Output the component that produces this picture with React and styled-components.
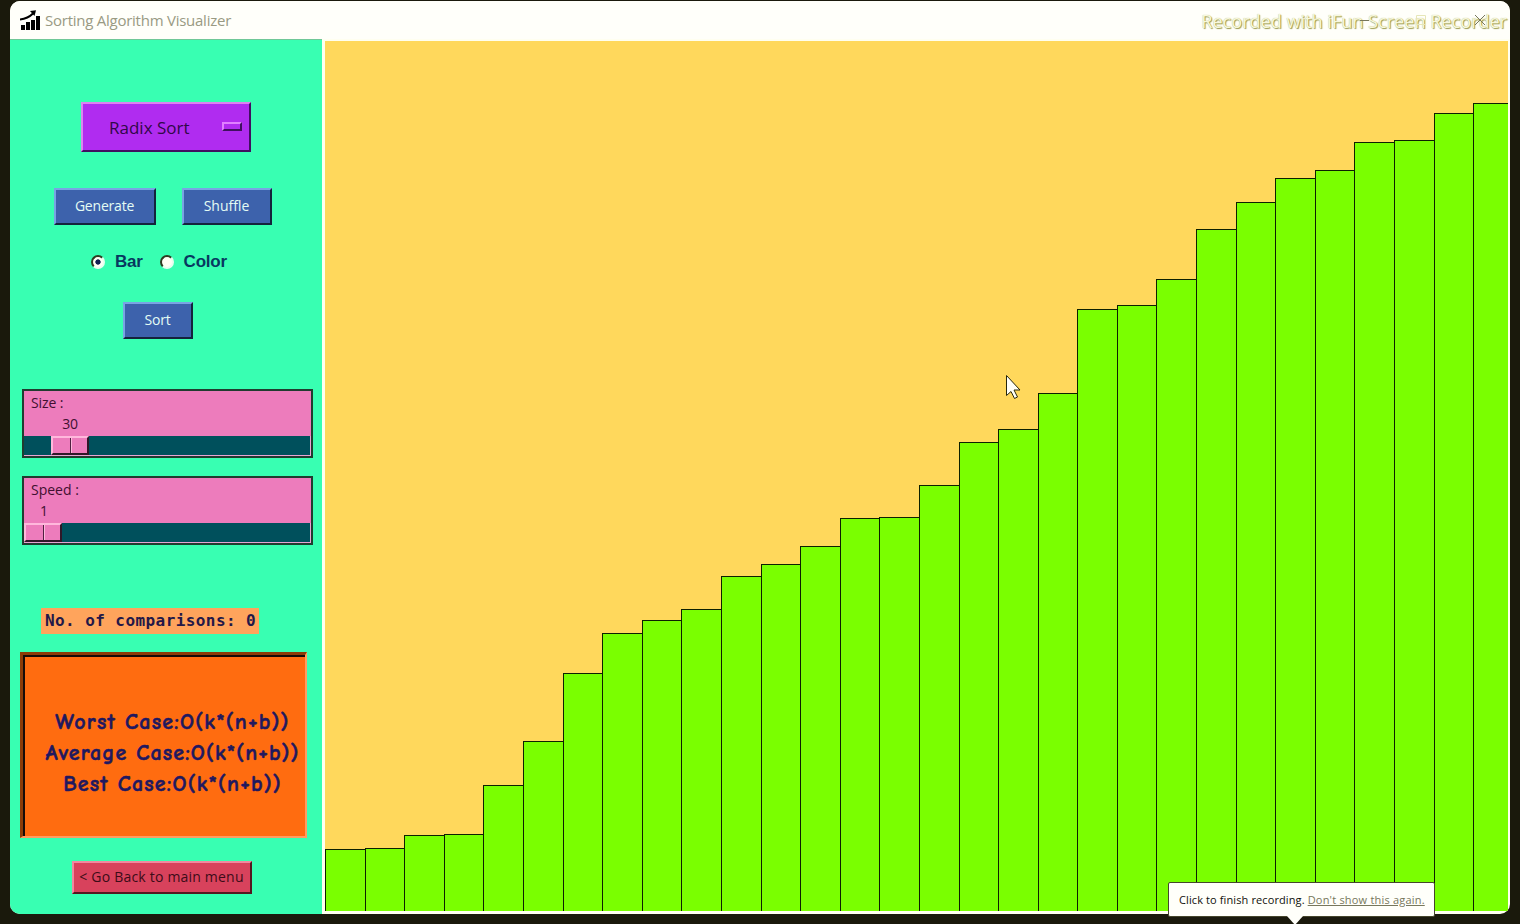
import React from "react";
import styled, { createGlobalStyle } from "styled-components";

const GlobalStyle = createGlobalStyle`
  * { box-sizing: border-box; }
  body { margin: 0; overflow: hidden; background: #1a190c; font-family: "Open Sans", "Noto Sans", sans-serif; }
`;

const Desktop = styled.div`
  position: relative;
  width: 1520px;
  height: 924px;
  padding: 1px 10px 0;
  background: #1a190c;
  overflow: hidden;
`;

const Window = styled.main`
  width: 1500px;
  height: 913px;
  display: flex;
  flex-direction: column;
  border-radius: 10px;
  overflow: hidden;
  background: #fffff0;
`;

const TitleBar = styled.header`
  position: relative;
  flex: 0 0 38px;
  display: flex;
  align-items: center;
  padding-left: 10px;
  gap: 4px;
  background: #fffffa;
  color: #999a83;
  font-size: 15px;
  letter-spacing: -0.25px;
`;

const Controls = styled.svg`
  position: absolute;
  right: 14px;
  top: 9px;
`;

const Watermark = styled.div`
  position: absolute;
  right: 3px;
  top: 8px;
  font-size: 18px;
  line-height: 25px;
  letter-spacing: 0.04px;
  color: #f8f8dc;
  white-space: nowrap;
  text-shadow: 1px 1px 1px #98984c, 0 0 1px #b4b470;
`;

const Body = styled.div`
  flex: 1;
  display: flex;
  min-height: 0;
`;

const Sidebar = styled.aside`
  flex: 0 0 312px;
  display: flex;
  flex-direction: column;
  align-items: flex-start;
  padding-top: 62px;
  border-top: 1px solid #70c898;
  background: #38ffb2;
`;

const Raised = styled.button`
  display: flex;
  align-items: center;
  justify-content: center;
  width: ${(p) => p.$w}px;
  height: ${(p) => p.$h}px;
  padding: 0 1px 2px 0;
  border: 2px solid;
  border-color: ${(p) => p.$light} ${(p) => p.$dark} ${(p) => p.$dark} ${(p) => p.$light};
  background: ${(p) => p.$bg};
  color: ${(p) => p.$fg};
  font: ${(p) => p.$size || 14}px "Open Sans", "Noto Sans", sans-serif;
  letter-spacing: ${(p) => p.$track || 0}px;
  white-space: nowrap;
`;

const AlgorithmMenu = styled(Raised)`
  margin-left: 71px;
  justify-content: space-between;
  padding: 1px 7px 0 26px;
`;

const Indicator = styled.i`
  width: 20px;
  height: 9px;
  margin-bottom: 3px;
  border: 2px solid;
  border-color: #e080ff #401060 #401060 #e080ff;
`;

const ButtonRow = styled.div`
  display: flex;
  gap: 26px;
  margin: 36px 0 0 44px;
`;

const RadioRow = styled.div`
  display: flex;
  align-items: center;
  height: 24px;
  margin: 25px 0 0 81px;
  gap: 17px;
`;

const RadioLabel = styled.label`
  display: flex;
  align-items: center;
  gap: 10px;
  color: #083860;
  font: bold 17px/22px "Liberation Sans", Arial, sans-serif;
  letter-spacing: -0.25px;
`;

const RadioDot = styled.i`
  width: 14px;
  height: 14px;
  margin-bottom: 1px;
  border-radius: 50%;
  border: 2px solid;
  border-color: #2f3b20 #e8fff0 #e8fff0 #2f3b20;
  background: ${(p) => (p.$on ? "radial-gradient(circle, #102050 2.3px, #fffff4 3px)" : "#fffff4")};
`;

const SortWrap = styled.div`
  margin: 28px 0 50px 113px;
`;

const Scale = styled.section`
  width: 291px;
  height: 69px;
  margin: 0 0 18px 12px;
  display: flex;
  flex-direction: column;
  border: 2px solid #203c30;
  background: #ed7cbc;
  color: #401030;
  font-size: 14px;
  line-height: 21px;
`;

const ScaleLabel = styled.div`
  padding: 1px 0 0 7px;
  height: 22px;
  letter-spacing: ${(p) => p.$track}px;
`;

const ScaleValue = styled.div`
  width: 38px;
  height: 23px;
  margin-left: ${(p) => p.$left}px;
  text-align: center;
  letter-spacing: -0.2px;
`;

const Trough = styled.div`
  flex: 1;
  padding-left: ${(p) => p.$left}px;
  background: #00505c;
  border: solid #e8a4d4;
  border-width: 0 1px 1px 0;
`;

const Thumb = styled.div`
  display: flex;
  width: 38px;
  height: 19px;
  border: 2px solid;
  border-color: #ffb8dc #301828 #301828 #ffb8dc;
  background: #ed7cbc;
  &::before { content: ""; width: 17px; border-right: 1px solid #502040; }
  &::after { content: ""; flex: 1; border-left: 1px solid #ffb8dc; }
`;

const Comparisons = styled.div`
  width: 218px;
  height: 26px;
  margin: 45px 0 0 31px;
  padding-left: 4px;
  background: #ffa45c;
  color: #241848;
  font: bold 16px/26px "DejaVu Sans Mono", monospace;
  letter-spacing: 0.42px;
  white-space: pre;
`;

const CaseBox = styled.section`
  width: 287px;
  height: 186px;
  margin: 18px 0 23px 10px;
  padding: 16px 0 0 17px;
  display: flex;
  flex-direction: column;
  align-items: center;
  justify-content: center;
  border: solid;
  border-width: 3px 2px 2px 3px;
  border-color: #8c3c08 #ff9c60 #ff9c60 #8c3c08;
  box-shadow: inset 2px 2px #160c08;
  background: #ff6c10;
  color: #201860;
`;

const CaseLine = styled.div`
  font: bold 22px/31.3px "Comic Sans MS", "Comic Neue", Lato, sans-serif;
  letter-spacing: ${(p) => p.$track}px;
  -webkit-text-stroke: 0.5px #201860;
  white-space: nowrap;
`;

const BackWrap = styled.div`
  margin-left: 62px;
`;

const Canvas = styled.section`
  flex: 1;
  min-width: 0;
  margin: 2px 2px 3px 3px;
  display: flex;
  align-items: flex-end;
  overflow: hidden;
  background: #ffd85c;
`;

const Bar = styled.div`
  flex: 0 0 39.6px;
  border: solid #0c2000;
  border-width: 1px 0 0 1px;
  background: #7aff00;
`;

const Cursor = styled.svg`
  position: absolute;
  left: 1005px;
  top: 374px;
`;

const Tooltip = styled.div`
  position: absolute;
  left: 1168px;
  top: 882px;
  width: 267px;
  height: 35px;
  display: flex;
  align-items: center;
  gap: 3px;
  padding-left: 10px;
  border: 1px solid #46462c;
  border-radius: 2px;
  background: #fffffa;
  color: #10100a;
  font-size: 11px;
  letter-spacing: 0.11px;
  white-space: nowrap;
  &::after {
    content: "";
    position: absolute;
    left: 118px;
    top: 33px;
    border: solid transparent;
    border-width: 9px 8px 0;
    border-top-color: #fffffa;
  }
`;

const Dismiss = styled.a`
  color: #77775c;
  letter-spacing: 0.2px;
  text-decoration: underline;
`;

const blue = { $bg: "#3d62ac", $light: "#78a4e4", $dark: "#14243c", $fg: "#e4fcf4" };

const tops = [
  849, 848, 835, 834, 785, 741, 673, 633, 620, 609, 576, 564, 546, 518, 517,
  485, 442, 429, 393, 309, 305, 279, 229, 202, 178, 170, 142, 140, 113, 103,
];
const FLOOR = 911;

export default function App() {
  return (
    <Desktop>
      <GlobalStyle />
      <Window>
        <TitleBar>
          <svg width="21" height="21" viewBox="0 0 21 21">
            <path d="M1 15h4v5H1zM6 12h4v8H6zM11 10h4v10h-4zM16 6h4v14h-4z" fill="#000" />
            <path d="M0 9.500Q8 8.500 13 3.500" fill="none" stroke="#000" strokeWidth="2" />
            <path d="M10 1L16 .2 14.500 6z" fill="#000" />
          </svg>
          <span>Sorting Algorithm Visualizer</span>
          <Watermark>Recorded with iFun Screen Recorder</Watermark>
          <Controls width="136" height="20" viewBox="0 0 136 20" fill="none" stroke="#77775c">
            <path d="M0 10.500h9" />
            <path d="M56.500 5.500h9v9h-9z" stroke="#e6e6b8" />
            <path d="M115 5l10 10M125 5l-10 10" />
          </Controls>
        </TitleBar>
        <Body>
          <Sidebar>
            <AlgorithmMenu $w={170} $h={50} $bg="#b02cf0" $light="#dc84f0" $dark="#401060" $fg="#300848" $size={17} $track={0}>
              <span>Radix Sort</span>
              <Indicator />
            </AlgorithmMenu>
            <ButtonRow>
              <Raised {...blue} $w={102} $h={37} $track={-0.2}>Generate</Raised>
              <Raised {...blue} $w={90} $h={37}>Shuffle</Raised>
            </ButtonRow>
            <RadioRow>
              <RadioLabel><RadioDot $on />Bar</RadioLabel>
              <RadioLabel><RadioDot />Color</RadioLabel>
            </RadioRow>
            <SortWrap>
              <Raised {...blue} $w={70} $h={37} $track={-0.2}>Sort</Raised>
            </SortWrap>
            <Scale>
              <ScaleLabel $track={-0.1}>Size :</ScaleLabel>
              <ScaleValue $left={27}>30</ScaleValue>
              <Trough $left={27}><Thumb /></Trough>
            </Scale>
            <Scale>
              <ScaleLabel $track={0}>Speed :</ScaleLabel>
              <ScaleValue $left={1}>1</ScaleValue>
              <Trough $left={0}><Thumb /></Trough>
            </Scale>
            <Comparisons>No. of comparisons: 0</Comparisons>
            <CaseBox>
              <CaseLine $track={1.2}>Worst Case:O(k*(n+b))</CaseLine>
              <CaseLine $track={1.1}>Average Case:O(k*(n+b))</CaseLine>
              <CaseLine $track={1.15}>Best Case:O(k*(n+b))</CaseLine>
            </CaseBox>
            <BackWrap>
              <Raised $w={180} $h={33} $track={0.2} $bg="#d8425c" $light="#f088a0" $dark="#541820" $fg="#3c0c18">&lt; Go Back to main menu</Raised>
            </BackWrap>
          </Sidebar>
          <Canvas>
            {tops.map((top, i) => (
              <Bar key={i} style={{ height: FLOOR - top }} />
            ))}
          </Canvas>
        </Body>
      </Window>
      <Cursor width="18" height="28" viewBox="0 0 18 28">
        <path d="M1.500 1.500v20l4.500-4 3.500 7 3-1.500-3.500-7h6z" fill="#fffff8" stroke="#26260c" />
      </Cursor>
      <Tooltip>
        <span>Click to finish recording.</span>
        <Dismiss>Don't show this again.</Dismiss>
      </Tooltip>
    </Desktop>
  );
}
